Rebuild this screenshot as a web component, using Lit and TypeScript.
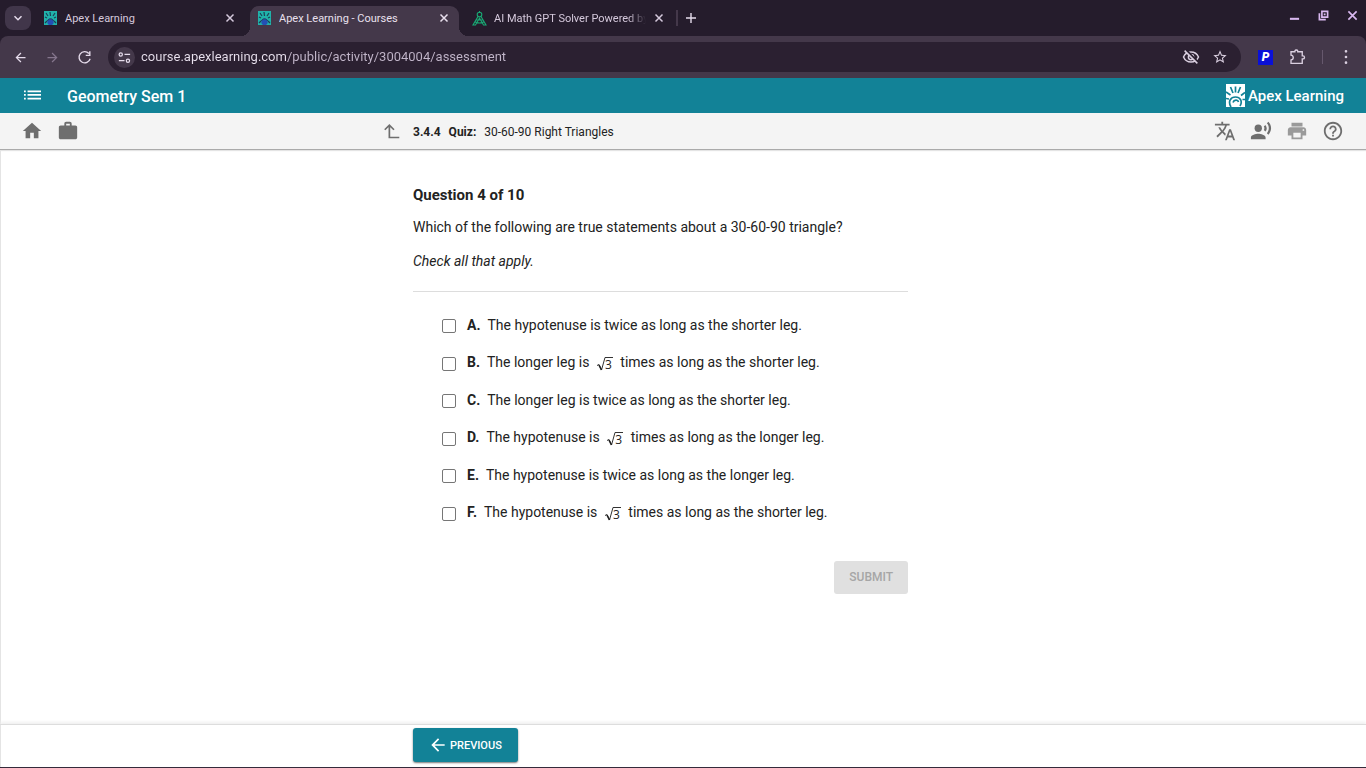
import { LitElement, html, css, svg } from "lit";
import { customElement } from "lit/decorators.js";

const icon = (body: unknown, size = 24, cls = "") =>
  html`<svg class="icon ${cls}" width=${size} height=${size} viewBox="0 0 24 24" aria-hidden="true">${body}</svg>`;

const path = (d: string) => svg`<path d=${d}></path>`;
const line = (d: string, w = 2) =>
  svg`<path d=${d} fill="none" stroke="currentColor" stroke-width=${w}></path>`;

const HOME = path("M10 20v-6h4v6h5v-8h3L12 3 2 12h3v8z");
const WORK = path(
  "M20 6h-4V4c0-1.11-.89-2-2-2h-4c-1.11 0-2 .89-2 2v2H4c-1.11 0-1.99.89-1.99 2L2 19c0 1.11.89 2 2 2h16c1.11 0 2-.89 2-2V8c0-1.11-.89-2-2-2zm-6 0h-4V4h4v2z"
);
const TRANSLATE = path(
  "M12.87 15.07l-2.54-2.51.03-.03c1.74-1.94 2.98-4.17 3.71-6.53H17V4h-7V2H8v2H1v1.99h11.17C11.5 7.92 10.44 9.75 9 11.35 8.07 10.32 7.3 9.19 6.69 8h-2c.73 1.63 1.73 3.17 2.98 4.56l-5.09 5.02L4 19l5-5 3.11 3.11.76-2.04zM18.5 10h-2L12 22h2l1.12-3h4.75L21 22h2l-4.5-12zm-2.62 7l1.62-4.33L19.12 17h-3.24z"
);
const VOICE = svg`<circle cx="9" cy="9" r="4"></circle>${path(
  "M9 15c-2.67 0-8 1.34-8 4v2h16v-2c0-2.66-5.33-4-8-4zm7.76-9.64l-1.68 1.69c.84 1.18.84 2.71 0 3.89l1.68 1.69c2.02-2.02 2.02-5.07 0-7.27zM20.07 2l-1.63 1.63c2.77 3.02 2.77 7.56 0 10.74L20.07 16c3.9-3.89 3.91-9.95 0-14z"
)}`;
const PRINT = path(
  "M19 8H5c-1.66 0-3 1.34-3 3v6h4v4h12v-4h4v-6c0-1.66-1.34-3-3-3zm-3 11H8v-5h8v5zm3-7c-.55 0-1-.45-1-1s.45-1 1-1 1 .45 1 1-.45 1-1 1zm-1-9H6v4h12V3z"
);
const HELP = path(
  "M11 18h2v-2h-2v2zm1-16C6.48 2 2 6.48 2 12s4.48 10 10 10 10-4.48 10-10S17.52 2 12 2zm0 18c-4.41 0-8-3.59-8-8s3.59-8 8-8 8 3.59 8 8-3.59 8-8 8zm0-14c-2.21 0-4 1.79-4 4h2c0-1.1.9-2 2-2s2 .9 2 2c0 2-3 1.75-3 5h2c0-2.25 3-2.5 3-5 0-2.21-1.79-4-4-4z"
);
const BACK = path("M20 11H7.83l5.59-5.59L12 4l-8 8 8 8 1.41-1.41L7.83 13H20v-2z");
const FORWARD = path("M12 4l-1.41 1.41L16.17 11H4v2h12.17l-5.58 5.59L12 20l8-8z");
const RELOAD = svg`${line("M19 5.500A9 9 0 1 0 21 14M20.500 2V8.500H14", 2.2)}`;
const STAR = path(
  "M22 9.24l-7.19-.62L12 2 9.19 8.63 2 9.24l5.46 4.73L5.82 21 12 17.27 18.18 21l-1.63-7.03L22 9.24zM12 15.4l-3.76 2.27 1-4.28-3.32-2.88 4.38-.38L12 6.1l1.71 4.04 4.38.38-3.32 2.88 1 4.28L12 15.4z"
);
const HIDDEN = svg`${line("M2 12C4 7.500 7.700 5.300 12 5.300S20 7.500 22 12C20 16.500 16.300 18.700 12 18.700S4 16.500 2 12Z")}
  <circle cx="12" cy="12" r="3.500" fill="none" stroke="currentColor" stroke-width="2"></circle>
  <path d="M5 2.500 21.500 19" stroke="#2b2031" stroke-width="3"></path>${line("M3.500 3.500 20.500 20.500")}`;
const PUZZLE = line("M4 5H9.200V4A2 2 0 0 1 13 4V5H19V10.500H20A2 2 0 0 1 20 14.500H19V20.500H4V16C8 15.500 8 10 4 9.500Z", 1.8);
const CLOSE = line("M5 5 19 19M19 5 5 19", 3);
const CLOSE_WINDOW = line("M3 3 21 21M21 3 3 21", 3.6);
const CHEVRON = line("M5 8.500 12 15.500 19 8.500", 3);
const PLUS = line("M12 2V22M2 12H22", 2.8);
const TUNE = svg`${line("M12 7H21M3 17H12")}<circle cx="6" cy="7" r="2.600" fill="none" stroke="currentColor" stroke-width="2"></circle><circle cx="17.500" cy="17" r="2.600" fill="none" stroke="currentColor" stroke-width="2"></circle>`;
const LIST = path("M0 5h2.500v2.500H0zM5 5h19v2.500H5zM0 10h2.500v2.500H0zM5 10h19v2.500H5zM0 15h2.500v2.500H0zM5 15h19v2.500H5z");
const MORE = path("M12 1.500a2 2 0 1 0 0 4 2 2 0 0 0 0-4zm0 8.500a2 2 0 1 0 0 4 2 2 0 0 0 0-4zm0 8.500a2 2 0 1 0 0 4 2 2 0 0 0 0-4z");
const UP_LEVEL = line("M23 20.500H9V3M2.500 9.500 9 3 15.500 9.500", 2.4);
const MINIMIZE = svg`<path d="M2 17h20v4.500H2z"></path>`;
const RESTORE = svg`${line("M8.500 3H21V15.500H8.500Z", 3.6)}${line("M3 7V21H17", 3.6)}<path d="M12.500 7.500h4v4h-4z"></path>`;

const favicon = html`<svg class="icon" width="13" height="14" viewBox="0 0 13 14" aria-hidden="true">
  <rect width="13" height="14" fill="#20b2aa"></rect>
  <path d="M2 2 4 5M6 1 6.500 5M11 2 9 5M1 6 3 7M12 6 10 7M1 12 3 10M12 12 10 10" stroke="#1d3f55" stroke-width="1.200"></path>
  <circle cx="6.500" cy="11" r="3.200" fill="#2450b4"></circle>
  <path d="M3.500 10C4 7 9 7 9.500 10" stroke="#1d3f55" fill="none"></path>
</svg>`;

const compass = html`<svg class="icon outline" width="15" height="15" viewBox="0 0 15 15" stroke="#19a974" stroke-width="1.100" aria-hidden="true">
  <circle cx="7.500" cy="3.500" r="2.300"></circle>
  <path d="M6 5.500 1 14H3.500L7.500 7 11.500 14H14L9 5.500M2.500 10.500C5 12.500 10 12.500 12.500 10.500M4.500 9H10.500M7.500 0V2"></path>
</svg>`;

const brandMark = html`<svg class="icon" width="19" height="23" viewBox="0 0 19 23" aria-hidden="true">
  <rect width="19" height="23" fill="#fff"></rect>
  <g class="outline" stroke="#128297" stroke-width="1.700">
    <path d="M4.500 3 7 9M9.500 2.500V8.500M14.500 3 12 9M0 8 4.500 11M19 8.500 15 11.500"></path>
    <path d="M5 23C1.500 17 5 13 9.500 13S17 17 14 22M0 14.500 3 15M19 15.500H16.500"></path>
    <path d="M7 18.500C8 15.500 12 15.500 12.500 18"></path>
  </g>
</svg>`;

const radical = html`<span class="radical" role="math" aria-label="square root of 3"
  ><svg width="16" height="17" viewBox="0 0 16 17" aria-hidden="true"
    ><path d="M0 10.500 2 9.500 4.500 15 8 2.500H16" fill="none" stroke="#333" stroke-width="1"></path
    ><path d="M2 10 4.500 15" stroke="#222" stroke-width="1.600"></path
    ></svg><span class="radicand">3</span></span>`;

interface Option { letter: string; before: string; after?: string; }

const OPTIONS: Option[] = [
  { letter: "A", before: "The hypotenuse is twice as long as the shorter leg." },
  { letter: "B", before: "The longer leg is", after: "times as long as the shorter leg." },
  { letter: "C", before: "The longer leg is twice as long as the shorter leg." },
  { letter: "D", before: "The hypotenuse is", after: "times as long as the longer leg." },
  { letter: "E", before: "The hypotenuse is twice as long as the longer leg." },
  { letter: "F", before: "The hypotenuse is", after: "times as long as the shorter leg." },
];

const base = css`
  * { box-sizing: border-box; }
  button { font: inherit; color: inherit; background: none; border: 0; padding: 0; display: flex; align-items: center; justify-content: center; cursor: pointer; }
  .icon { display: block; flex: none; fill: currentColor; }
  .outline { fill: none; }
`;

@customElement("browser-bar")
class BrowserBar extends LitElement {
  static styles = [base, css`
    :host { display: block; background: #251c2c; color: #e6dcec; }
    .strip { display: flex; height: 36px; padding: 0 8px 0 5px; align-items: stretch; }
    .search { width: 26px; height: 24px; margin: 6px 8px 0 0; border-radius: 8px; background: #41364a; }
    .tabs { display: flex; flex: 1; min-width: 0; padding-top: 6px; }
    .tab { display: flex; align-items: center; flex: 0 1 209px; min-width: 0; padding: 0 9px 6px 8px; gap: 8px; font-size: 11px; line-height: 16px; color: #d5c9dc; }
    .tab:first-child { flex-basis: 211px; padding-left: 5px; padding-right: 14px; }
    .tab.active { position: relative; height: 30px; background: #44384a; color: #e9e0ee; border-radius: 9px 9px 0 0; }
    .tab.active::before, .tab.active::after { content: ""; position: absolute; bottom: 0; width: 9px; height: 9px; }
    .tab.active::before { right: 100%; background: radial-gradient(circle at 0 0, transparent 9px, #44384a 9px); }
    .tab.active::after { left: 100%; background: radial-gradient(circle at 100% 0, transparent 9px, #44384a 9px); }
    .tab:nth-child(3) { flex-basis: 211px; padding-left: 13px; padding-right: 5px; gap: 7px; }
    .name { flex: 1; overflow: hidden; white-space: nowrap; padding-top: 1px; }
    .fade { mask-image: linear-gradient(90deg, #000 88%, transparent); }
    .new { width: 28px; border-left: 2px solid #44384a; height: 16px; margin: 4px 0 0 6px; }
    .controls { display: flex; gap: 18px; align-items: flex-start; padding-top: 10px; color: #d9b8f0; }
    .toolbar { display: flex; align-items: center; height: 42px; padding: 0 12px 0 13px; background: #44384a; border-radius: 8px 8px 0 0; }
    .nav { display: flex; gap: 17px; margin-right: 16px; }
    .dim { color: #85768d; }
    .address { display: flex; align-items: center; flex: 1; height: 30px; margin: 0 17px 0 0; padding: 0 13px 0 6px; border-radius: 15px; background: #2b2031; }
    .site { width: 21px; height: 21px; border-radius: 50%; background: #44384a; margin-right: 6px; }
    .url { flex: 1; min-width: 0; border: 0; outline: 0; padding: 0; font: 13px/20px Roboto, sans-serif; color: transparent; background: linear-gradient(90deg, #eae2ef 145px, #c2b6ca 145px); background-clip: text; -webkit-background-clip: text; }
    .marks { display: flex; gap: 12px; color: #dacfe0; }
    .tools { display: flex; align-items: center; color: #dacfe0; }
    .ext { width: 15px; height: 15px; background: #0a10d8; color: #fff; font-weight: 900; font-style: italic; font-size: 12px; line-height: 15px; margin-right: 15px; }
    .rule { width: 1px; height: 14px; background: #66586d; margin: 0 15px 0 16px; }
  `];

  render() {
    const tab = (mark: unknown, name: string, active = false, fade = false) => html`
      <div class="tab ${active ? "active" : ""}" role="tab" aria-selected=${active}>
        ${mark}<span class="name ${fade ? "fade" : ""}">${name}</span>
        <button aria-label="Close tab">${icon(CLOSE, 12)}</button>
      </div>`;
    return html`
      <div class="strip">
        <button class="search" aria-label="Search tabs">${icon(CHEVRON, 12)}</button>
        <div class="tabs" role="tablist">
          ${tab(favicon, "Apex Learning")}
          ${tab(favicon, "Apex Learning - Courses", true)}
          ${tab(compass, "AI Math GPT Solver Powered by", false, true)}
          <button class="new" aria-label="New tab">${icon(PLUS, 12)}</button>
        </div>
        <div class="controls">
          <button aria-label="Minimize">${icon(MINIMIZE, 11)}</button>
          <button aria-label="Restore">${icon(RESTORE, 11)}</button>
          <button aria-label="Close window">${icon(CLOSE_WINDOW, 11)}</button>
        </div>
      </div>
      <div class="toolbar">
        <div class="nav">
          <button aria-label="Back">${icon(BACK, 15)}</button>
          <button class="dim" aria-label="Forward">${icon(FORWARD, 15)}</button>
          <button aria-label="Reload">${icon(RELOAD, 15)}</button>
        </div>
        <div class="address">
          <button class="site" aria-label="Site information">${icon(TUNE, 15)}</button>
          <input class="url" type="text" aria-label="Address" value="course.apexlearning.com/public/activity/3004004/assessment" />
          <div class="marks">
            <button aria-label="Third-party cookies blocked">${icon(HIDDEN, 18)}</button>
            <button aria-label="Bookmark this tab">${icon(STAR, 16)}</button>
          </div>
        </div>
        <div class="tools">
          <button class="ext" aria-label="Extension">P</button>
          <button aria-label="Extensions">${icon(PUZZLE, 18)}</button>
          <span class="rule"></span>
          <button aria-label="Menu">${icon(MORE, 16)}</button>
        </div>
      </div>`;
  }
}

@customElement("app-root")
class AppRoot extends LitElement {
  static styles = [base, css`
    :host { display: flex; flex-direction: column; min-height: 100vh; box-sizing: border-box; border-bottom: 1px solid #2b2031; background: #fff; color: #222; font-family: Roboto, sans-serif; }
    .course { display: flex; align-items: center; height: 35px; padding: 0 22px 0 24px; background: #128297; color: #fff; }
    .course h1 { flex: 1; margin: 0 0 0 26px; padding-top: 2px; font-size: 16px; line-height: 24px; font-weight: 500; }
    .brand { display: flex; align-items: center; gap: 3px; color: #fff; text-decoration: none; font: 500 15px/22px Roboto, sans-serif; }
    .crumbs { display: grid; grid-template-columns: 1fr minmax(0, 540px) 1fr; align-items: center; height: 37px; background: #f4f4f4; border-bottom: 1px solid #aaa; color: #6e6e6e; box-shadow: 0 1px 1px #e4e4e4; }
    .left { display: flex; align-items: center; gap: 14px; padding: 0 13px 0 21px; }
    .up { margin-left: auto; }
    .activity { margin: 0; padding-top: 2px; font-size: 12px; line-height: 20px; font-weight: 400; color: #222; }
    .activity b { margin-right: 5px; }
    .right { display: flex; justify-content: flex-end; gap: 14px; padding-right: 22px; }
    .faded { color: #9a9a9a; }
    main { flex: 1; box-shadow: inset 1px 0 #e4e4e4; }
    .column { width: 100%; max-width: 540px; margin: 0 auto; padding-right: 45px; }
    .question { padding-top: 35px; font-size: 14px; line-height: 20px; }
    h2 { margin: 0 0 12px; font-size: 15px; line-height: 20px; font-weight: 700; }
    .question p { margin: 0 0 14px; }
    fieldset { margin: 20px 0 0; padding: 14px 0 0 29px; border: 0; border-top: 1px solid #ddd; min-width: 0; }
    .option { display: flex; align-items: center; min-height: 37px; }
    .option.tall { min-height: 38px; }
    .option input { appearance: none; flex: none; width: 14px; height: 14px; margin: 3px 11px 0 0; border: 1px solid #767676; border-radius: 2px; background: #fff; }
    .option b { margin-right: 7px; }
    .radical { display: inline-flex; vertical-align: -5px; height: 17px; margin: 0 4px; position: relative; }
    .radicand { position: absolute; right: 1px; bottom: 0; font: 12px/14px "Open Sans", sans-serif; }
    .actions { display: flex; justify-content: flex-end; padding: 30px 0 24px; }
    .submit { height: 33px; padding: 0 15px 1px; border-radius: 3px; background: #e0e0e0; color: #a6a6a6; font-size: 12px; font-weight: 500; }
    footer { border-top: 1px solid #ddd; box-shadow: 0 -2px 3px #f0f0f0, inset 1px 0 #e4e4e4; padding: 3px 0 5px; }
    .previous { height: 34px; padding: 0 16px 0 15px; gap: 2px; border-radius: 3px; background: #128297; color: #fff; font-size: 11px; font-weight: 500; box-shadow: 0 1px 2px #777; }
  `];

  render() {
    return html`
      <browser-bar></browser-bar>
      <header>
        <div class="course">
          <button aria-label="Course menu">${icon(LIST, 17)}</button>
          <h1>Geometry Sem 1</h1>
          <a class="brand" href="#">${brandMark}<span>Apex Learning</span></a>
        </div>
        <nav class="crumbs">
          <div class="left">
            <button aria-label="Home">${icon(HOME, 22)}</button>
            <button aria-label="Portfolio">${icon(WORK, 22)}</button>
            <button class="up" aria-label="Up one level">${icon(UP_LEVEL, 17)}</button>
          </div>
          <p class="activity"><b>3.4.4</b> <b>Quiz:</b> 30-60-90 Right Triangles</p>
          <div class="right">
            <button aria-label="Translate">${icon(TRANSLATE, 22)}</button>
            <button aria-label="Read aloud">${icon(VOICE, 22)}</button>
            <button class="faded" aria-label="Print">${icon(PRINT, 22)}</button>
            <button aria-label="Help">${icon(HELP, 22)}</button>
          </div>
        </nav>
      </header>
      <main>
        <form class="column question">
          <h2>Question 4 of 10</h2>
          <p>Which of the following are true statements about a 30-60-90 triangle?</p>
          <p><em>Check all that apply.</em></p>
          <fieldset aria-label="Answers">
            ${OPTIONS.map((o) => html`
              <label class="option ${o.after ? "tall" : ""}">
                <input type="checkbox" name="answer" value=${o.letter} />
                <b>${o.letter}.</b>
                <span>${o.before}${o.after ? html` ${radical} ${o.after}` : ""}</span>
              </label>`)}
          </fieldset>
          <div class="actions"><button class="submit" type="submit" disabled>SUBMIT</button></div>
        </form>
      </main>
      <footer>
        <div class="column"><button class="previous">${icon(BACK, 20)}PREVIOUS</button></div>
      </footer>`;
  }
}
